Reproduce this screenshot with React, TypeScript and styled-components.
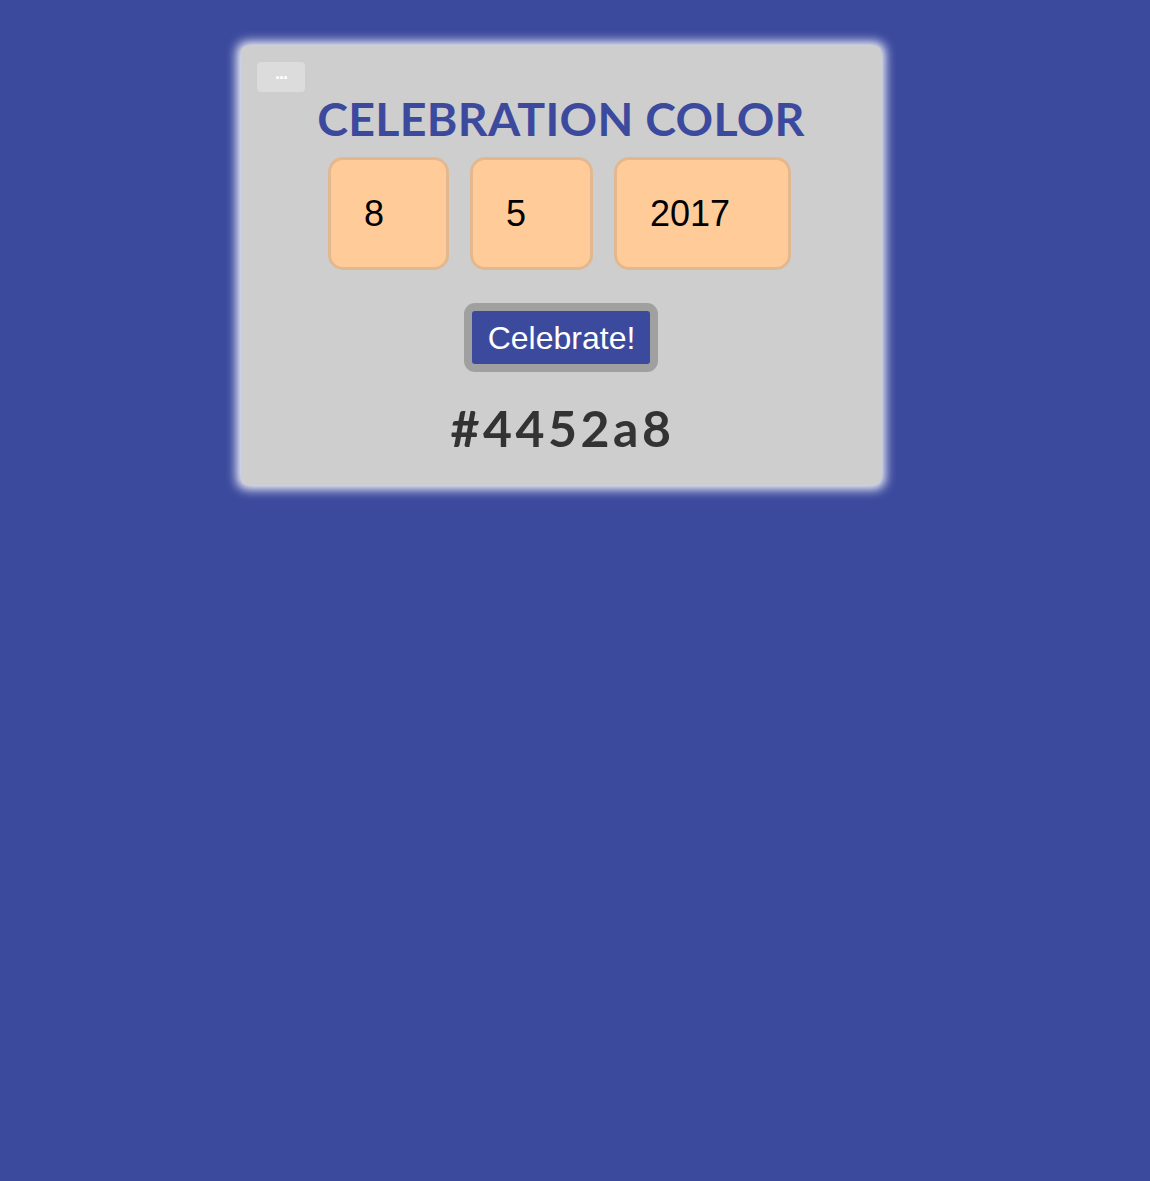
import React from "react";
import styled, { createGlobalStyle } from "styled-components";

const Global = createGlobalStyle`
  html, body { margin: 0; padding: 0; background: #3c4a9e; }
  body { font-family: "Liberation Sans", Arial, sans-serif; min-height: 1181px; }
`;

const Page = styled.div`
  padding: 46px 0 0 241px;
`;

const Card = styled.div`
  box-sizing: border-box;
  width: 640px;
  height: 439px;
  background: #cecece;
  border-radius: 6px;
  box-shadow: 0 0 11px 4px #ffffff;
  padding: 16px 16px 0;
  display: flex;
  flex-direction: column;
  align-items: center;
  position: relative;
`;

const MenuButton = styled.button`
  position: absolute;
  top: 16px;
  left: 16px;
  width: 48px;
  height: 30px;
  border: none;
  border-radius: 4px;
  background: #dcdcdc;
  color: #ffffff;
  font-family: "Liberation Sans", Arial, sans-serif;
  font-size: 18px;
  font-weight: 700;
  letter-spacing: -1px;
  line-height: 1;
  padding: 0 0 8px;
`;

const Title = styled.h1`
  margin: 31px 0 0;
  font-family: "Lato", "Noto Sans", sans-serif;
  font-weight: 700;
  font-size: 46.5px;
  line-height: 50px;
  color: #3c4a9e;
  letter-spacing: 0.3px;
`;

const Inputs = styled.div`
  display: flex;
  gap: 21px;
  margin-top: 14px;
  margin-right: 3px;
`;

const Field = styled.div<{ $w: number }>`
  box-sizing: border-box;
  width: ${(p) => p.$w}px;
  height: 113px;
  background: #ffcc99;
  border: 3px solid #e2b890;
  border-radius: 15px;
  padding-left: 33px;
  display: flex;
  align-items: center;
  font-family: "Liberation Sans", Arial, sans-serif;
  font-size: 36px;
  color: #000;
`;

const CelebrateButton = styled.button`
  margin-top: 33px;
  box-sizing: border-box;
  height: 69px;
  padding: 0 15px 0 16px;
  background: #3c4a9e;
  border: 8px solid #a0a0a0;
  border-radius: 11px;
  color: #ffffff;
  font-family: "Liberation Sans", Arial, sans-serif;
  font-size: 32px;
  line-height: 1;
`;

const Hex = styled.div`
  margin-top: 27px;
  font-family: "Lato", "Noto Sans", sans-serif;
  font-weight: 700;
  font-size: 50px;
  line-height: 58px;
  color: #333333;
  letter-spacing: 3.5px;
  padding-left: 3px;
`;

export default function App() {
  return (
    <>
      <Global />
      <Page>
        <Card>
          <MenuButton>...</MenuButton>
          <Title>CELEBRATION COLOR</Title>
          <Inputs>
            <Field $w={121}>8</Field>
            <Field $w={123}>5</Field>
            <Field $w={177}>2017</Field>
          </Inputs>
          <CelebrateButton>Celebrate!</CelebrateButton>
          <Hex>#4452a8</Hex>
        </Card>
      </Page>
    </>
  );
}
